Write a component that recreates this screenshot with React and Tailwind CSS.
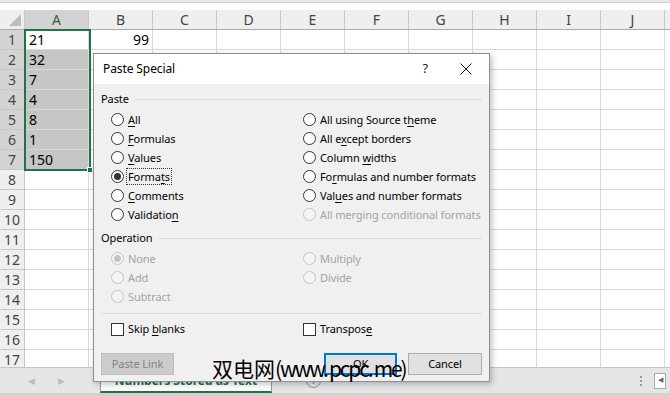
import React from 'react'

const COLS = ['A', 'B', 'C', 'D', 'E', 'F', 'G', 'H', 'I', 'J']
const DATA = { 1: ['21', '99'], 2: ['32'], 3: ['7'], 4: ['4'], 5: ['8'], 6: ['1'], 7: ['150'] }

// label split around the access-key letter
function Label({ pre, k, post }) {
  return (
    <span>
      {pre}
      {k && <span className="underline underline-offset-2">{k}</span>}
      {post}
    </span>
  )
}

function Radio({ pre = '', k = '', post = '', checked, disabled, focus }) {
  return (
    <div className="flex items-center h-[19px] whitespace-nowrap">
      <span
        className={
          'w-[13px] h-[13px] rounded-full border flex items-center justify-center shrink-0 ' +
          (disabled ? 'border-[#c4c4c4] bg-[#f4f4f4]' : 'border-[#333] bg-white')
        }
      >
        {checked && (
          <span className={'w-[7px] h-[7px] rounded-full ' + (disabled ? 'bg-[#c4c4c4]' : 'bg-[#333]')} />
        )}
      </span>
      <span
        className={
          'ml-[3px] px-[1px] leading-[15px] ' +
          (disabled ? 'text-[#a3a3a3] ' : 'text-black ') +
          (focus ? 'outline outline-1 outline-dotted outline-[#333]' : '')
        }
      >
        <Label pre={pre} k={k} post={post} />
      </span>
    </div>
  )
}

function Check({ pre, k, post }) {
  return (
    <div className="flex items-center h-[18px] whitespace-nowrap">
      <span className="w-[13px] h-[13px] border border-[#333] bg-white shrink-0" />
      <span className="ml-[4px]">
        <Label pre={pre} k={k} post={post} />
      </span>
    </div>
  )
}

function Group({ title }) {
  return (
    <div className="flex items-center h-[14px]">
      <span className="text-black">{title}</span>
      <span className="flex-1 h-px bg-[#dcdcdc] ml-[6px]" />
    </div>
  )
}

function Dialog() {
  return (
    <div className="absolute left-[93px] top-[53px] w-[397px] h-[329px] border border-[#8f8f8f] shadow-[2px_2px_6px_rgba(0,0,0,0.25)] flex flex-col text-[11px] tracking-[-0.1px] font-['Noto_Sans',sans-serif] z-10">
      <div className="h-[30px] bg-white flex items-center pl-[9px] pr-[17px] shrink-0">
        <span className="text-[12px] text-black flex-1">Paste Special</span>
        <span className="text-[13px] text-[#222] mr-[32px]">?</span>
        <svg width="12" height="12" viewBox="0 0 12 12">
          <path d="M0.5 0.5 L11.5 11.5 M11.5 0.5 L0.5 11.5" stroke="#222" strokeWidth="1" />
        </svg>
      </div>
      <div className="flex-1 bg-[#f0f0f0] px-[7px] pt-[8px] flex flex-col">
        <Group title="Paste" />
        <div className="grid grid-cols-[192px_1fr] pl-[10px] mt-[4px]">
          <div>
            <Radio k="A" post="ll" />
            <Radio k="F" post="ormulas" />
            <Radio k="V" post="alues" />
            <Radio pre="Forma" k="t" post="s" checked focus />
            <Radio k="C" post="omments" />
            <Radio pre="Validatio" k="n" />
          </div>
          <div>
            <Radio pre="All using Source t" k="h" post="eme" />
            <Radio pre="All e" k="x" post="cept borders" />
            <Radio pre="Column " k="w" post="idths" />
            <Radio pre="Fo" k="r" post="mulas and number formats" />
            <Radio pre="Val" k="u" post="es and number formats" />
            <Radio pre="All merging conditional formats" disabled />
          </div>
        </div>
        <div className="mt-[7px]">
          <Group title="Operation" />
        </div>
        <div className="grid grid-cols-[192px_1fr] pl-[10px] mt-[4px]">
          <div>
            <Radio pre="None" checked disabled />
            <Radio pre="Add" disabled />
            <Radio pre="Subtract" disabled />
          </div>
          <div>
            <Radio pre="Multiply" disabled />
            <Radio pre="Divide" disabled />
          </div>
        </div>
        <div className="h-px bg-[#dcdcdc] mt-[7px]" />
        <div className="grid grid-cols-[192px_1fr] pl-[10px] mt-[6px]">
          <Check pre="Skip " k="b" post="lanks" />
          <Check pre="Transpos" k="e" />
        </div>
        <div className="flex mt-[15px]">
          <div className="w-[73px] h-[22px] border border-[#bfbfbf] bg-[#cccccc] text-[#838383] flex items-center justify-center">
            Paste Link
          </div>
          <div className="ml-auto w-[73px] h-[22px] border-2 border-[#0078d7] bg-[#e1e1e1] text-black flex items-center justify-center">
            OK
          </div>
          <div className="ml-[11px] w-[74px] h-[22px] border border-[#adadad] bg-[#e1e1e1] text-black flex items-center justify-center">
            Cancel
          </div>
        </div>
      </div>
    </div>
  )
}

export default function App() {
  const rows = Array.from({ length: 17 }, (_, i) => i + 1)
  return (
    <div className="relative w-[670px] h-[395px] overflow-hidden bg-white font-['Noto_Sans',sans-serif] select-none">
      {/* formula bar edge */}
      <div className="h-[10px] flex flex-col">
        <div className="h-[3px] bg-[#e8e8e8] border-b border-[#d0d0d0]" />
        <div className="flex-1 bg-white" />
      </div>

      {/* column headers */}
      <div className="flex h-[20px] bg-[#efefef] border-b border-[#ababab]">
        <div className="w-[25px] shrink-0 border-r border-[#c8c8c8] flex items-end justify-end pr-[3px] pb-[3px]">
          <svg width="12" height="12" viewBox="0 0 12 12">
            <path d="M12 0 L12 12 L0 12 Z" fill="#bdbdbd" />
          </svg>
        </div>
        {COLS.map((c) => (
          <div
            key={c}
            className={
              'w-[64px] shrink-0 border-r border-[#c8c8c8] flex items-center justify-center text-[14px] ' +
              (c === 'A' ? 'bg-[#d3d3d3] text-[#3b5e46]' : 'text-[#444]')
            }
          >
            {c}
          </div>
        ))}
      </div>

      {/* cells */}
      <div className="h-[337px] overflow-hidden">
        {rows.map((r) => (
          <div key={r} className="flex h-[20px]">
            <div
              className={
                'w-[25px] shrink-0 border-r border-b border-[#c8c8c8] flex items-center justify-center text-[14px] text-[#444] ' +
                (r <= 7 ? 'bg-[#d3d3d3]' : 'bg-[#efefef]')
              }
            >
              {r}
            </div>
            {COLS.map((c, ci) => {
              const v = DATA[r]?.[ci]
              const sel = ci === 0 && r >= 2 && r <= 7
              return (
                <div
                  key={c}
                  className={
                    'w-[64px] shrink-0 border-r border-b border-[#d9d9d9] flex items-center text-[14px] text-black ' +
                    (sel ? 'bg-[#c6c6c6] ' : 'bg-white ') +
                    (ci === 1 ? 'justify-end pr-[3px]' : 'pl-[4px]')
                  }
                >
                  {v}
                </div>
              )
            })}
          </div>
        ))}
      </div>

      {/* selection outline */}
      <div className="absolute left-[24px] top-[29px] w-[67px] h-[142px] border-2 border-[#217346]" />
      <div className="absolute left-[87px] top-[167px] w-[6px] h-[6px] bg-[#217346] border border-white" />

      {/* sheet tab bar */}
      <div className="h-[28px] bg-[#e6e6e6] border-t border-[#c6c6c6] border-b-2 border-b-[#d2d2d2] flex items-stretch">
        <div className="w-[100px] flex items-center pl-[28px] gap-[23px] text-[9px] text-[#bcbcbc]">
          <span>◀</span>
          <span>▶</span>
        </div>
        <div className="w-[172px] bg-white border-x border-[#9a9a9a] border-b-2 border-b-[#217346] flex items-end justify-center pb-[1px] text-[12px] font-bold text-[#217346] whitespace-nowrap">
          Numbers Stored as Text
        </div>
        <div className="ml-[34px] flex items-center">
          <span className="w-[15px] h-[15px] rounded-full border border-[#8a8a8a] flex items-center justify-center text-[12px] text-[#666] leading-none">
            +
          </span>
        </div>
        <div className="ml-auto flex items-center pr-[4px] gap-[12px]">
          <span className="flex flex-col gap-[2px]">
            <span className="w-[2px] h-[2px] bg-[#9a9a9a]" />
            <span className="w-[2px] h-[2px] bg-[#9a9a9a]" />
            <span className="w-[2px] h-[2px] bg-[#9a9a9a]" />
          </span>
          <span className="w-[12px] h-[16px] border border-[#a8a8a8] bg-white text-[7px] text-[#666] flex items-center justify-center">
            ◀
          </span>
        </div>
      </div>

      <Dialog />

      {/* watermark */}
      <div className="absolute left-[212px] top-[354px] z-20 text-[21px] leading-[28px] text-black font-['Noto_Sans_CJK_SC',sans-serif] whitespace-nowrap">
        双电网<span className="tracking-[-2.2px]">(www. pcpc. me)</span>
      </div>
    </div>
  )
}
